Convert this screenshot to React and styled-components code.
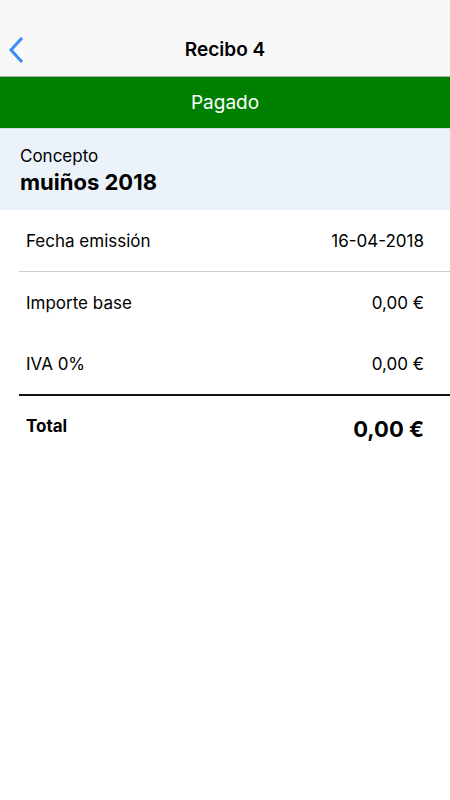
import React from 'react'
import styled, { createGlobalStyle } from 'styled-components'

const Global = createGlobalStyle`
  body {
    margin: 0;
    background: #fff;
    font-family: Inter, "Liberation Sans", sans-serif;
    color: #000;
  }
`

const Page = styled.div`
  width: 450px;
  min-height: 800px;
  background: #fff;
`

const Header = styled.div`
  height: 77px;
  background: #f8f8f8;
  border-bottom: 1px solid #a8a8a8;
  display: grid;
  grid-template-columns: 50px 1fr 50px;
  align-items: end;
  padding-bottom: 12px;
  box-sizing: border-box;
`

const Back = styled.button`
  border: none;
  background: none;
  padding: 0 0 0 8px;
  height: 28px;
  display: flex;
  align-items: center;
`

const Title = styled.h1`
  margin: 0;
  text-align: center;
  font-size: 19px;
  font-weight: 600;
  line-height: 28px;
`

const Status = styled.div`
  height: 51px;
  background: #008000;
  color: #fff;
  display: flex;
  align-items: center;
  justify-content: center;
  font-size: 19px;
  border-bottom: 1px solid #d8dde2;
`

const Concept = styled.div`
  background: #ebf2f9;
  height: 81px;
  box-sizing: border-box;
  padding: 16px 20px 0;
`

const ConceptLabel = styled.div`
  font-size: 17px;
  line-height: 23px;
`

const ConceptValue = styled.div`
  font-size: 22px;
  font-weight: 700;
  line-height: 28px;
`

const Rows = styled.div`
  padding-left: 19px;
`

const Row = styled.div`
  height: ${p => p.$h || 61}px;
  display: flex;
  align-items: ${p => p.$top ? 'flex-start' : 'center'};
  justify-content: space-between;
  padding: ${p => p.$top ? '20px' : '0'} 26px 0 7px;
  font-size: 17px;
  border-bottom: ${p => p.$line || 'none'};
`

const Label = styled.span`
  font-weight: ${p => p.$bold ? 700 : 400};
`

const Value = styled.span`
  font-size: ${p => p.$big ? '22px' : '17px'};
  font-weight: ${p => p.$bold ? 700 : 400};
  line-height: ${p => p.$big ? '26px' : '20px'};
`

const Chevron = () => (
  <svg width="16" height="26" viewBox="0 0 16 26">
    <path d="M13 2 L3 13 L13 24" fill="none" stroke="#3b8cf7" strokeWidth="3" strokeLinecap="square" />
  </svg>
)

export default function App() {
  return (
    <Page>
      <Global />
      <Header>
        <Back><Chevron /></Back>
        <Title>Recibo 4</Title>
        <span />
      </Header>
      <Status>Pagado</Status>
      <Concept>
        <ConceptLabel>Concepto</ConceptLabel>
        <ConceptValue>muiños 2018</ConceptValue>
      </Concept>
      <Rows>
        <Row $line="1px solid #cccccc">
          <Label>Fecha emissión</Label>
          <Value>16-04-2018</Value>
        </Row>
        <Row>
          <Label>Importe base</Label>
          <Value>0,00 €</Value>
        </Row>
        <Row $line="2px solid #111">
          <Label>IVA 0%</Label>
          <Value>0,00 €</Value>
        </Row>
        <Row $top $h={48}>
          <Label $bold>Total</Label>
          <Value $bold $big>0,00 €</Value>
        </Row>
      </Rows>
    </Page>
  )
}
